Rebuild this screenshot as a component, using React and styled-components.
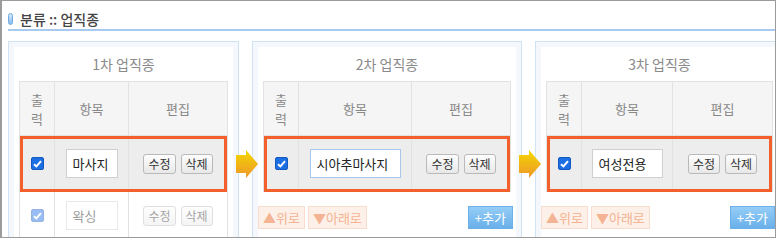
/* ------------------------- External Dependencies -------------------------- */
import React from 'react'
import styled, { createGlobalStyle } from 'styled-components'

/* --------------------------- Global Styles -------------------------------- */
const GlobalStyle = createGlobalStyle`
  html, body {
    margin: 0;
    padding: 0;
    background: #fff;
  }
  body {
    font-family: "Noto Sans CJK KR", "Noto Sans", sans-serif;
  }
`

/* --------------------------- Styled Components ---------------------------- */
const Frame = styled.div`
  width: 776px;
  height: 238px;
  box-sizing: border-box;
  border: 1px solid #9b9b9b;
  border-left-width: 2px;
  overflow: hidden;
  background: #fff;
`

const Header = styled.div`
  margin-left: 6px;
  height: 30px;
  box-sizing: border-box;
  padding-top: 10px;
  border-bottom: 2px solid #a7caee;
  display: flex;
  align-items: flex-start;
  gap: 7px;
`

const Pill = styled.span`
  margin-top: 2px;
  width: 5px;
  height: 12px;
  box-sizing: border-box;
  border-radius: 3px;
  border: 1px solid #72a9e0;
  background: linear-gradient(#d6e9fb, #86bbec);
`

const Title = styled.h1`
  margin: 0;
  font-size: 14px;
  line-height: 17px;
  font-weight: 500;
  color: #444;
`

const PanelRow = styled.div`
  display: flex;
  align-items: flex-start;
  gap: 13px;
  margin: 10px 0 0 6px;
`

const Panel = styled.section`
  flex: none;
  border: 1px solid #d0e3f4;
  background: #f4f8fc;
  padding: 5px 5px 0;
`

const Inner = styled.div`
  background: #fff;
  padding: 0 5px 20px;
`

const Heading = styled.h2`
  margin: 0;
  height: 34px;
  line-height: 34px;
  text-align: center;
  font-size: 14px;
  font-weight: 400;
  color: #8a8a8a;
`

const Table = styled.div`
  border: 1px solid #e2e2e2;
  border-bottom: none;
`

const Row = styled.div`
  position: relative;
  display: grid;
  grid-template-columns: ${p => p.$cols};
  height: ${p => p.$h}px;
  border-bottom: 1px solid #e2e2e2;
  background: ${p => p.$bg || '#fff'};
  ${p => p.$selected && `
    outline: 3px solid #f4602c;
    outline-offset: -3px;
  `}
`

const Cell = styled.div`
  display: flex;
  flex-direction: ${p => (p.$stack ? 'column' : 'row')};
  align-items: center;
  justify-content: center;
  gap: 5px;
  text-align: center;
  font-size: 13px;
  line-height: 17px;
  color: #888;
  & + & {
    border-left: 1px solid #e2e2e2;
  }
  ${p => p.$dim && `& > * { opacity: .45; }`}
`

const Line = styled.span`
  display: block;
  line-height: 19px;
  margin-top: -5px;
  &:first-child {
    margin-top: 0;
  }
`

const Check = styled.span`
  width: 13px;
  height: 13px;
  box-sizing: border-box;
  border-radius: 2px;
  background: #1b6fe3;
  border: 1px solid #1459c2;
  display: flex;
  align-items: center;
  justify-content: center;
`

const Field = styled.span`
  width: ${p => p.$w}px;
  height: 29px;
  box-sizing: border-box;
  padding: 0 6px;
  border: 1px solid ${p => (p.$focus ? '#a6c8ec' : '#cfcfcf')};
  background: #fff;
  font-size: 13px;
  line-height: 27px;
  color: #222;
  text-align: left;
  white-space: nowrap;
`

const EditButton = styled.button`
  height: 20px;
  padding: 0 4px;
  border: 1px solid #b9b9b9;
  border-radius: 3px;
  background: linear-gradient(#fdfdfd, #e8e8e8);
  font-family: inherit;
  font-size: 12px;
  line-height: 18px;
  color: #333;
`

const Actions = styled.div`
  display: flex;
  align-items: center;
  gap: 3px;
  margin: 14px -2px 0 -5px;
`

const MoveButton = styled.button`
  height: 23px;
  padding: 0 4px;
  border: 1px solid #f8dccd;
  background: #fdf0e8;
  font-family: inherit;
  font-size: 13px;
  line-height: 21px;
  color: #f4b392;
`

const AddButton = styled.button`
  margin-left: auto;
  height: 23px;
  padding: 0 6px;
  border: 1px solid #6dafe8;
  background: linear-gradient(#95cdf7, #69b0ea);
  font-family: inherit;
  font-size: 13px;
  line-height: 21px;
  color: #fff;
`

const Arrow = styled.svg`
  position: absolute;
  left: -28px;
  top: 50%;
  transform: translateY(-50%);
`

/* ------------------------------- Pieces ----------------------------------- */
const CheckBox = () => (
  <Check>
    <svg width="9" height="8" viewBox="0 0 9 8">
      <path d="M1 4.2 L3.4 6.4 L8 1.2" fill="none" stroke="#fff" strokeWidth="2" />
    </svg>
  </Check>
)

const FlowArrow = ({ id }) => (
  <Arrow width="22" height="28" viewBox="0 0 22 28">
    <defs>
      <linearGradient id={id} x1="0" y1="0" x2="0" y2="1">
        <stop offset="0" stopColor="#f4d800" />
        <stop offset="1" stopColor="#ee952c" />
      </linearGradient>
    </defs>
    <path d="M0 5 H10 V0 L22 14 L10 28 V23 H0 Z" fill={`url(#${id})`} />
  </Arrow>
)

const levels = [
  { title: '1차 업직종', cols: '34px 74px 99px', field: 52, item: '마사지', rest: ['왁싱'] },
  { title: '2차 업직종', cols: '34px 113px 99px', field: 91, item: '시아추마사지', focus: true, arrow: true, actions: true },
  { title: '3차 업직종', cols: '34px 91px 100px', field: 71, item: '여성전용', arrow: true, actions: true },
]

const Level = ({ level, index }) => (
  <Panel>
    <Inner>
      <Heading>{level.title}</Heading>
      <Table>
        <Row $cols={level.cols} $h={53} $bg="#f5f5f5">
          <Cell $stack>
            <Line>출</Line>
            <Line>력</Line>
          </Cell>
          <Cell>항목</Cell>
          <Cell>편집</Cell>
        </Row>
        <Row $cols={level.cols} $h={55} $bg="#ededed" $selected>
          {level.arrow && <FlowArrow id={`arrow-${index}`} />}
          <Cell><CheckBox /></Cell>
          <Cell><Field $w={level.field} $focus={level.focus}>{level.item}</Field></Cell>
          <Cell>
            <EditButton>수정</EditButton>
            <EditButton>삭제</EditButton>
          </Cell>
        </Row>
        {(level.rest || []).map((name, i) => (
          <Row key={i} $cols={level.cols} $h={47}>
            <Cell $dim><CheckBox /></Cell>
            <Cell $dim><Field $w={level.field}>{name}</Field></Cell>
            <Cell $dim>
              <EditButton>수정</EditButton>
              <EditButton>삭제</EditButton>
            </Cell>
          </Row>
        ))}
      </Table>
      {level.actions && (
        <Actions>
          <MoveButton>▲위로</MoveButton>
          <MoveButton>▼아래로</MoveButton>
          <AddButton>+추가</AddButton>
        </Actions>
      )}
    </Inner>
  </Panel>
)

/* ------------------------------- Component -------------------------------- */
const App = () => (
  <>
    <GlobalStyle />
    <Frame>
      <Header>
        <Pill />
        <Title>분류 :: 업직종</Title>
      </Header>
      <PanelRow>
        {levels.map((level, i) => <Level key={i} level={level} index={i} />)}
      </PanelRow>
    </Frame>
  </>
)

/* ---------------------------- Export Package ------------------------------ */
export default App
